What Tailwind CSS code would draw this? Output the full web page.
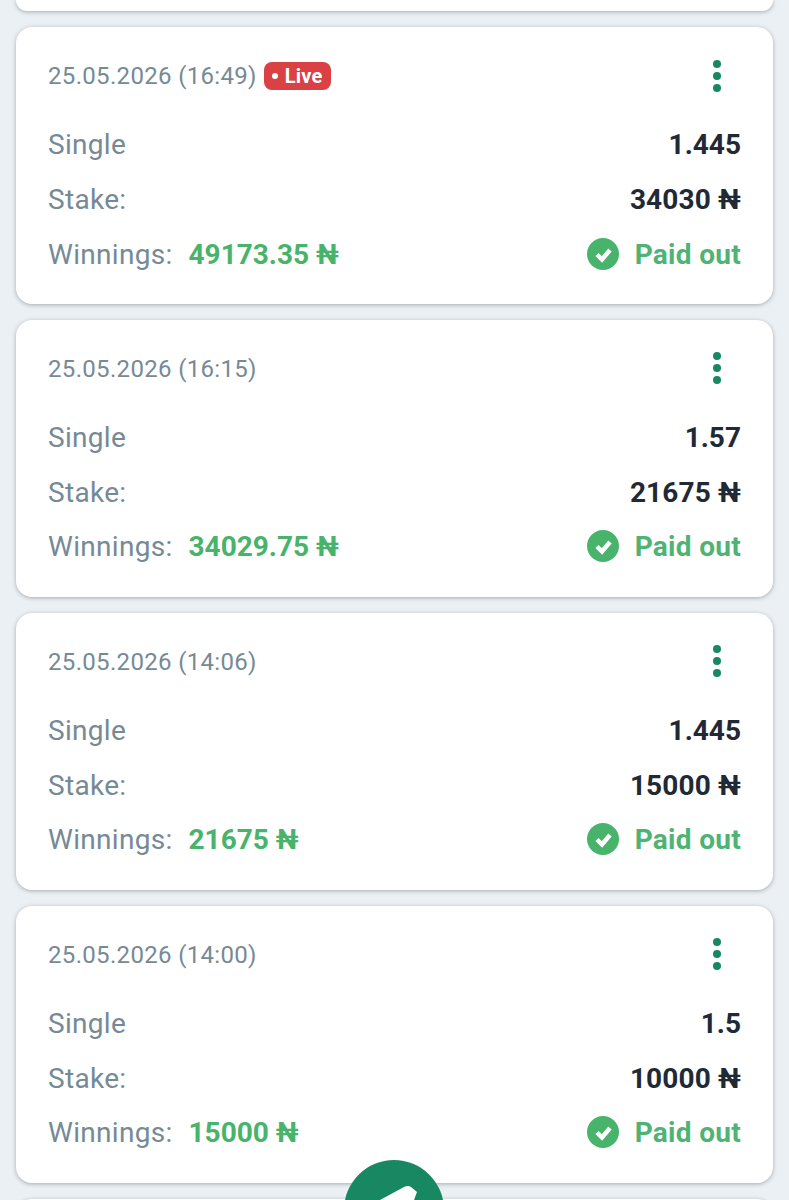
<!DOCTYPE html>
<html>
<head>
<meta charset="utf-8">
<script src="https://cdn.jsdelivr.net/npm/@tailwindcss/browser@4"></script>
</head>
<body class="m-0">
<div class="relative w-[789px] h-[1200px] overflow-hidden bg-[#ebf0f4] font-['Roboto',sans-serif]">
  <div class="flex flex-col gap-4 px-4">
    <div class="h-[11px] bg-white rounded-b-2xl shadow-[0_1px_4px_rgba(60,70,80,0.4)]"></div>

    <div class="h-[277px] bg-white rounded-2xl shadow-[0_1px_4px_rgba(60,70,80,0.4)] px-8 pt-[30px]">
      <div class="flex items-center justify-between h-[38px]">
        <div class="flex items-center gap-[7px]">
          <span class="text-[24px] tracking-[0.33px] text-[#768a96]">25.05.2026 (16:49)</span>
          <span class="h-7 pl-2 pr-2 rounded-lg bg-[#da4145] text-white text-[20px] tracking-[0.2px] font-bold flex items-center gap-[7px]"><span class="w-[6px] h-[6px] rounded-full bg-white"></span>Live</span>
        </div>
        <svg class="w-8 h-[38px] mr-2" viewBox="0 0 32 38"><g fill="#188863"><circle cx="16" cy="7" r="4"/><circle cx="16" cy="19" r="4"/><circle cx="16" cy="31" r="4"/></g></svg>
      </div>
      <div class="mt-[30px] flex flex-col gap-[15px] text-[28px] tracking-[0.3px] leading-10">
        <div class="flex justify-between"><span class="text-[#768a96]">Single</span><span class="font-bold text-[#1f2a36] tracking-normal">1.445</span></div>
        <div class="flex justify-between"><span class="text-[#768a96]">Stake:</span><span class="font-bold text-[#1f2a36] tracking-[0.15px]">34030 ₦</span></div>
        <div class="flex justify-between">
          <div class="flex gap-4"><span class="text-[#768a96]">Winnings:</span><span class="font-bold tracking-normal text-[#48b36b]">49173.35 ₦</span></div>
          <div class="flex items-center gap-4 text-[#4fb374] font-bold">
            <svg class="w-8 h-8 -mt-[2px]" viewBox="0 0 32 32"><circle cx="16" cy="16" r="16" fill="#48b36b"/><path d="M10 16.5l5 5 8-9.5" fill="none" stroke="#fff" stroke-width="4.5"/></svg>
            <span>Paid out</span>
          </div>
        </div>
      </div>
    </div>

    <div class="h-[277px] bg-white rounded-2xl shadow-[0_1px_4px_rgba(60,70,80,0.4)] px-8 pt-[30px]">
      <div class="flex items-center justify-between h-[38px]">
        <span class="text-[24px] tracking-[0.33px] text-[#768a96]">25.05.2026 (16:15)</span>
        <svg class="w-8 h-[38px] mr-2 -mt-[2px]" viewBox="0 0 32 38"><g fill="#188863"><circle cx="16" cy="7" r="4"/><circle cx="16" cy="19" r="4"/><circle cx="16" cy="31" r="4"/></g></svg>
      </div>
      <div class="mt-[30px] flex flex-col gap-[15px] text-[28px] tracking-[0.3px] leading-10">
        <div class="flex justify-between"><span class="text-[#768a96]">Single</span><span class="font-bold text-[#1f2a36] tracking-normal">1.57</span></div>
        <div class="flex justify-between"><span class="text-[#768a96]">Stake:</span><span class="font-bold text-[#1f2a36] tracking-[0.15px]">21675 ₦</span></div>
        <div class="flex justify-between -mt-px">
          <div class="flex gap-4"><span class="text-[#768a96]">Winnings:</span><span class="font-bold tracking-normal text-[#48b36b]">34029.75 ₦</span></div>
          <div class="flex items-center gap-4 text-[#4fb374] font-bold">
            <svg class="w-8 h-8 -mt-[2px]" viewBox="0 0 32 32"><circle cx="16" cy="16" r="16" fill="#48b36b"/><path d="M10 16.5l5 5 8-9.5" fill="none" stroke="#fff" stroke-width="4.5"/></svg>
            <span>Paid out</span>
          </div>
        </div>
      </div>
    </div>

    <div class="h-[277px] bg-white rounded-2xl shadow-[0_1px_4px_rgba(60,70,80,0.4)] px-8 pt-[30px]">
      <div class="flex items-center justify-between h-[38px]">
        <span class="text-[24px] tracking-[0.33px] text-[#768a96]">25.05.2026 (14:06)</span>
        <svg class="w-8 h-[38px] mr-2 -mt-[2px]" viewBox="0 0 32 38"><g fill="#188863"><circle cx="16" cy="7" r="4"/><circle cx="16" cy="19" r="4"/><circle cx="16" cy="31" r="4"/></g></svg>
      </div>
      <div class="mt-[30px] flex flex-col gap-[15px] text-[28px] tracking-[0.3px] leading-10">
        <div class="flex justify-between"><span class="text-[#768a96]">Single</span><span class="font-bold text-[#1f2a36] tracking-normal">1.445</span></div>
        <div class="flex justify-between"><span class="text-[#768a96]">Stake:</span><span class="font-bold text-[#1f2a36] tracking-[0.15px]">15000 ₦</span></div>
        <div class="flex justify-between -mt-px">
          <div class="flex gap-4"><span class="text-[#768a96]">Winnings:</span><span class="font-bold tracking-normal text-[#48b36b]">21675 ₦</span></div>
          <div class="flex items-center gap-4 text-[#4fb374] font-bold">
            <svg class="w-8 h-8 -mt-[2px]" viewBox="0 0 32 32"><circle cx="16" cy="16" r="16" fill="#48b36b"/><path d="M10 16.5l5 5 8-9.5" fill="none" stroke="#fff" stroke-width="4.5"/></svg>
            <span>Paid out</span>
          </div>
        </div>
      </div>
    </div>

    <div class="h-[277px] bg-white rounded-2xl shadow-[0_1px_4px_rgba(60,70,80,0.4)] px-8 pt-[30px]">
      <div class="flex items-center justify-between h-[38px]">
        <span class="text-[24px] tracking-[0.33px] text-[#768a96]">25.05.2026 (14:00)</span>
        <svg class="w-8 h-[38px] mr-2 -mt-[2px]" viewBox="0 0 32 38"><g fill="#188863"><circle cx="16" cy="7" r="4"/><circle cx="16" cy="19" r="4"/><circle cx="16" cy="31" r="4"/></g></svg>
      </div>
      <div class="mt-[30px] flex flex-col gap-[15px] text-[28px] tracking-[0.3px] leading-10">
        <div class="flex justify-between"><span class="text-[#768a96]">Single</span><span class="font-bold text-[#1f2a36] tracking-normal">1.5</span></div>
        <div class="flex justify-between"><span class="text-[#768a96]">Stake:</span><span class="font-bold text-[#1f2a36] tracking-[0.15px]">10000 ₦</span></div>
        <div class="flex justify-between -mt-px">
          <div class="flex gap-4"><span class="text-[#768a96]">Winnings:</span><span class="font-bold tracking-normal text-[#48b36b]">15000 ₦</span></div>
          <div class="flex items-center gap-4 text-[#4fb374] font-bold">
            <svg class="w-8 h-8 -mt-[2px]" viewBox="0 0 32 32"><circle cx="16" cy="16" r="16" fill="#48b36b"/><path d="M10 16.5l5 5 8-9.5" fill="none" stroke="#fff" stroke-width="4.5"/></svg>
            <span>Paid out</span>
          </div>
        </div>
      </div>
    </div>

    <div class="h-10 bg-white rounded-t-2xl shadow-[0_1px_4px_rgba(60,70,80,0.4)]"></div>
  </div>

  <div class="absolute left-[344px] top-[1160px] w-[100px] h-[100px] rounded-full bg-[#188863]">
    <svg class="w-[100px] h-[100px]" viewBox="0 0 100 100"><path d="M36 40 L60 27 Q64 25 67 27 L73 32 L70 40 Z" fill="#fff"/></svg>
  </div>
</div>
</body>
</html>
